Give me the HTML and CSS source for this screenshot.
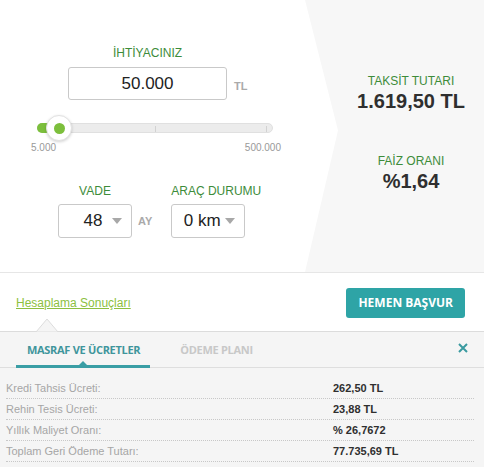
FILE: index.html
```html
<!DOCTYPE html>
<html>
<head>
<meta charset="utf-8">
<title>Kredi Hesaplama</title>
<link rel="stylesheet" href="styles.css">
</head>
<body>
<!-- Calculator -->
<div class="calc">
    <div class="form">
        <div class="need">
            <div class="label">İHTİYACINIZ</div>
            <div class="amount-row">
                <div class="amount">50.000</div>
                <span class="unit">TL</span>
            </div>
        </div>
        <div class="slider">
            <div class="track">
                <div class="fill"></div>
                <span class="tick tick-mid"></span>
                <span class="tick tick-end"></span>
            </div>
            <div class="knob"><span></span></div>
        </div>
        <div class="range"><span>5.000</span><span>500.000</span></div>
        <div class="options">
            <div class="opt">
                <div class="label">VADE</div>
                <div class="select select-term">
                    <span class="select-value">48</span><i class="caret"></i>
                </div>
            </div>
            <span class="unit unit-ay">AY</span>
            <div class="opt">
                <div class="label">ARAÇ DURUMU</div>
                <div class="select">
                    <span class="select-value">0 km</span><i class="caret"></i>
                </div>
            </div>
        </div>
    </div>
    <div class="result">
        <div class="label">TAKSİT TUTARI</div>
        <div class="value">1.619,50 TL</div>
        <div class="label label-rate">FAİZ ORANI</div>
        <div class="value">%1,64</div>
    </div>
</div>

<!-- Actions -->
<div class="actions">
    <a class="results-link" href="#">Hesaplama Sonuçları</a>
    <a class="btn" href="#">HEMEN BAŞVUR</a>
</div>

<!-- Details -->
<div class="details">
    <svg class="notch" width="22" height="14" viewBox="0 0 22 14">
        <polygon points="0,14 11,1 22,14" fill="#f5f5f5" stroke="#dcdcdc" stroke-width="1"/>
    </svg>
    <div class="tabs">
        <div class="tab active">MASRAF VE ÜCRETLER</div>
        <div class="tab">ÖDEME PLANI</div>
        <svg class="close" width="10" height="10" viewBox="0 0 10 10">
            <path d="M1 1L9 9M9 1L1 9" stroke="#3a9aa0" stroke-width="2" fill="none"/>
        </svg>
    </div>
    <div class="rows">
        <div class="row"><span class="key">Kredi Tahsis Ücreti:</span><span class="val">262,50 TL</span></div>
        <div class="row"><span class="key">Rehin Tesis Ücreti:</span><span class="val">23,88 TL</span></div>
        <div class="row"><span class="key">Yıllık Maliyet Oranı:</span><span class="val">% 26,7672</span></div>
        <div class="row"><span class="key">Toplam Geri Ödeme Tutarı:</span><span class="val">77.735,69 TL</span></div>
    </div>
</div>
</body>
</html>
```

FILE: styles.css
```css
body {
    font-family: "Liberation Sans", Arial, sans-serif;
    margin: 0px;
    background: #fff;
    color: #333;
    width: 484px;
    overflow: hidden;
}
a {
    text-decoration: none;
}
.calc {
    display: flex;
    height: 272px;
    border-bottom: 1px solid #e6e6e6;
}
.form {
    width: 305px;
    padding-top: 46px;
    box-sizing: border-box;
}
.label {
    color: #3d8c3a;
    font-size: 12px;
    line-height: 14px;
    text-align: center;
    white-space: nowrap;
}
.need {
    margin-left: 68px;
}
.need .label {
    width: 159px;
}
.amount-row {
    display: flex;
    align-items: center;
    margin-top: 7px;
}
.amount {
    width: 159px;
    height: 33px;
    box-sizing: border-box;
    border: 1px solid #c9c9c9;
    border-radius: 3px;
    font-size: 17px;
    line-height: 31px;
    text-align: center;
    color: #222;
}
.unit {
    color: #aaa;
    font-size: 11px;
    font-weight: bold;
    margin-left: 7px;
    margin-top: 4px;
}
.slider {
    position: relative;
    margin: 15px 0 0 37px;
    width: 236px;
    height: 26px;
}
.track {
    position: relative;
    top: 8px;
    height: 10px;
    background: #ececec;
    border: 1px solid #e0e0e0;
    box-sizing: border-box;
    border-radius: 5px;
}
.fill {
    width: 24px;
    height: 10px;
    margin: -1px 0 0 -1px;
    background: #7cbf3c;
    border-radius: 5px 0 0 5px;
}
.tick {
    position: absolute;
    top: 2px;
    width: 1px;
    height: 6px;
    background: #d2d2d2;
}
.tick-mid {
    left: 117px;
}
.tick-end {
    left: 228px;
}
.knob {
    position: absolute;
    left: 9px;
    top: 0px;
    width: 26px;
    height: 26px;
    box-sizing: border-box;
    border-radius: 50%;
    background: #fff;
    border: 1px solid #e2e2e2;
    box-shadow: 0 1px 3px rgba(0, 0, 0, 0.18);
    display: flex;
    align-items: center;
    justify-content: center;
}
.knob span {
    width: 11px;
    height: 11px;
    border-radius: 50%;
    background: #7cbf3c;
}
.range {
    display: flex;
    justify-content: space-between;
    width: 250px;
    margin: 1px 0 0 31px;
    color: #999;
    font-size: 10px;
    line-height: 12px;
}
.options {
    display: flex;
    align-items: flex-end;
    margin: 30px 0 0 58px;
}
.opt .label {
    margin-bottom: 6px;
}
.select {
    display: flex;
    align-items: center;
    width: 74px;
    height: 34px;
    box-sizing: border-box;
    border: 1px solid #c9c9c9;
    border-radius: 3px;
    padding: 0 9px 0 10px;
    white-space: nowrap;
}
.select-term {
    padding-left: 18px;
}
.select-value {
    flex: 1;
    text-align: center;
    font-size: 17px;
    color: #222;
}
.caret {
    width: 0;
    height: 0;
    margin-left: 3px;
    border-left: 5px solid transparent;
    border-right: 5px solid transparent;
    border-top: 6px solid #a8a8a8;
}
.unit-ay {
    margin: 0 19px 11px 6px;
}
.result {
    flex: 1;
    background: #f7f7f7;
    clip-path: polygon(0 0, 100% 0, 100% 100%, 0 100%, 33px 48%);
    padding: 74px 0 0 33px;
    text-align: center;
}
.value {
    font-size: 20px;
    font-weight: bold;
    line-height: 20px;
    margin-top: 3px;
    color: #2f2f2f;
}
.label-rate {
    margin-top: 43px;
}
.actions {
    display: flex;
    align-items: center;
    justify-content: space-between;
    height: 58px;
    padding: 0 19px 0 16px;
}
.results-link {
    color: #8cbf3f;
    font-size: 12px;
    text-decoration: underline;
    margin-top: 1px;
}
.btn {
    font-family: "Open Sans", sans-serif;
    font-weight: bold;
    font-size: 12px;
    color: #fff;
    background: #2ea4a6;
    border-radius: 3px;
    height: 30px;
    line-height: 30px;
    padding: 0 12px;
    margin-top: 1px;
}
.details {
    position: relative;
    background: #f5f5f5;
    border-top: 1px solid #dcdcdc;
    height: 140px;
}
.notch {
    position: absolute;
    left: 36px;
    top: -14px;
}
.tabs {
    display: flex;
    align-items: flex-end;
    height: 35px;
    padding-left: 16px;
    border-bottom: 1px solid #dedede;
}
.tab {
    font-family: "Open Sans", sans-serif;
    font-weight: bold;
    font-size: 11px;
    letter-spacing: -0.3px;
    line-height: 12px;
    color: #c8c8c8;
    padding: 0 10px 9px 11px;
    border-bottom: 3px solid transparent;
    margin-bottom: -1px;
    margin-right: 19px;
}
.tab.active {
    position: relative;
    color: #3f959c;
    border-bottom-color: #3a9ea5;
}
.tab.active:after {
    content: "";
    position: absolute;
    left: 50%;
    bottom: 0;
    margin-left: -4px;
    border-left: 4px solid transparent;
    border-right: 4px solid transparent;
    border-bottom: 4px solid #3a9ea5;
}
.close {
    margin: 0 16px 14px auto;
}
.rows {
    padding: 10px 10px 0 6px;
}
.row {
    display: flex;
    font-size: 11px;
    line-height: 20px;
    border-bottom: 1px dotted #c8c8c8;
}
.key {
    width: 327px;
    color: #a6a6a6;
}
.val {
    font-weight: bold;
    color: #2f2f2f;
}
```
